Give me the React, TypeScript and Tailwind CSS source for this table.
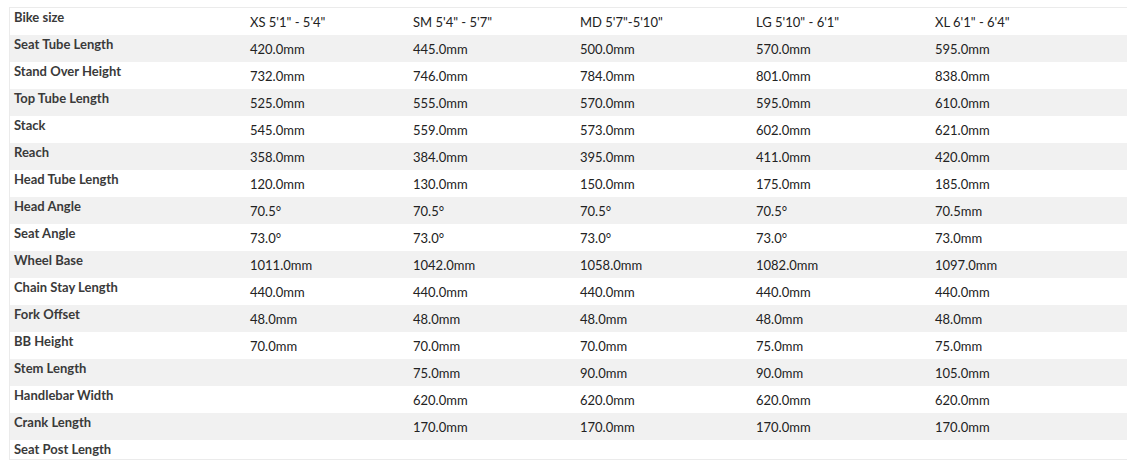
import React from "react";

const sizes = ["XS 5'1\" - 5'4\"", "SM 5'4\" - 5'7\"", "MD 5'7\"-5'10\"", "LG 5'10\" - 6'1\"", "XL 6'1\" - 6'4\""];

const rows: [string, string[]][] = [
  ["Bike size", sizes],
  ["Seat Tube Length", ["420.0mm", "445.0mm", "500.0mm", "570.0mm", "595.0mm"]],
  ["Stand Over Height", ["732.0mm", "746.0mm", "784.0mm", "801.0mm", "838.0mm"]],
  ["Top Tube Length", ["525.0mm", "555.0mm", "570.0mm", "595.0mm", "610.0mm"]],
  ["Stack", ["545.0mm", "559.0mm", "573.0mm", "602.0mm", "621.0mm"]],
  ["Reach", ["358.0mm", "384.0mm", "395.0mm", "411.0mm", "420.0mm"]],
  ["Head Tube Length", ["120.0mm", "130.0mm", "150.0mm", "175.0mm", "185.0mm"]],
  ["Head Angle", ["70.5°", "70.5°", "70.5°", "70.5°", "70.5mm"]],
  ["Seat Angle", ["73.0°", "73.0°", "73.0°", "73.0°", "73.0mm"]],
  ["Wheel Base", ["1011.0mm", "1042.0mm", "1058.0mm", "1082.0mm", "1097.0mm"]],
  ["Chain Stay Length", ["440.0mm", "440.0mm", "440.0mm", "440.0mm", "440.0mm"]],
  ["Fork Offset", ["48.0mm", "48.0mm", "48.0mm", "48.0mm", "48.0mm"]],
  ["BB Height", ["70.0mm", "70.0mm", "70.0mm", "75.0mm", "75.0mm"]],
  ["Stem Length", ["", "75.0mm", "90.0mm", "90.0mm", "105.0mm"]],
  ["Handlebar Width", ["", "620.0mm", "620.0mm", "620.0mm", "620.0mm"]],
  ["Crank Length", ["", "170.0mm", "170.0mm", "170.0mm", "170.0mm"]],
  ["Seat Post Length", ["", "", "", "", ""]],
];

export default function App() {
  return (
    <div className="bg-white w-[1127px] h-[465px] overflow-hidden pt-[7px] pl-[9px]" style={{ fontFamily: "Lato, 'Open Sans', sans-serif" }}>
      <div className="w-[1140px] border-t border-l border-b border-[#ebebeb]">
        {rows.map(([label, vals], i) => {
          const hasVals = vals.some((v) => v !== "");
          return (
            <div
              key={label}
              className={`grid grid-cols-[240px_163px_167px_176px_179px_1fr] items-start ${i % 2 === 1 ? "bg-[#f1f1f1]" : "bg-white"}`}
            >
              <div className="pl-[4px] text-[13px] font-bold leading-[18px] pb-[1px] text-[#3a3a3a]">{label}</div>
              {vals.map((v, j) => (
                <div key={j} className={`text-[13px] text-[#222] ${hasVals ? "pt-[1px] leading-[26px]" : "leading-[18px]"}`}>
                  {v}
                </div>
              ))}
              <div />
            </div>
          );
        })}
      </div>
    </div>
  );
}
